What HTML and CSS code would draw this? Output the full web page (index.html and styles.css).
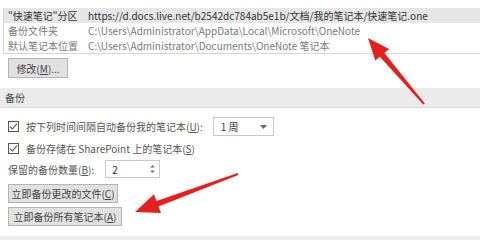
FILE: index.html
```html
<!DOCTYPE html>
<html lang="zh-CN">
<head>
<meta charset="UTF-8">
<link rel="stylesheet" href="styles.css">
</head>
<body>
<div id="page">
	<div class="paths">
		<div class="row active">
			<span class="key">"快速笔记"分区</span>
			<span class="val">https://d.docs.live.net/b2542dc784ab5e1b/文档/我的笔记本/快速笔记.one</span>
		</div>
		<div class="row">
			<span class="key">备份文件夹</span>
			<span class="val">C:\Users\Administrator\AppData\Local\Microsoft\OneNote</span>
		</div>
		<div class="row">
			<span class="key">默认笔记本位置</span>
			<span class="val">C:\Users\Administrator\Documents\OneNote 笔记本</span>
		</div>
	</div>
	<div class="btn btn-edit">修改(<u>M</u>)...</div>

	<div class="band">备份</div>

	<div class="opt opt-auto">
		<span class="chk"><svg width="9" height="9" viewBox="0 0 9 9"><path d="M1 4.6 L3.4 7 L8 1.6" fill="none" stroke="#555" stroke-width="1.1"/></svg></span>
		<span>按下列时间间隔自动备份我的笔记本(<u>U</u>):</span>
		<div class="select">1 周<svg class="caret" width="7" height="4" viewBox="0 0 7 4"><path d="M0 0 H7 L3.5 4 Z" fill="#666"/></svg></div>
	</div>
	<div class="opt opt-sp">
		<span class="chk"><svg width="9" height="9" viewBox="0 0 9 9"><path d="M1 4.6 L3.4 7 L8 1.6" fill="none" stroke="#555" stroke-width="1.1"/></svg></span>
		<span>备份存储在 SharePoint 上的笔记本(<u>S</u>)</span>
	</div>
	<div class="opt opt-keep">
		<span>保留的备份数量(<u>B</u>):</span>
		<div class="spin">2<svg class="arrows" width="5" height="10" viewBox="0 0 5 10"><path d="M0 3.5 L2.5 1 L5 3.5 Z M0 6.5 L2.5 9 L5 6.5 Z" fill="#777"/></svg></div>
	</div>
	<div class="btn btn-changed">立即备份更改的文件(<u>C</u>)</div>
	<div class="btn btn-all">立即备份所有笔记本(<u>A</u>)</div>
	<div class="foot"></div>
</div>

<svg class="marks" width="480" height="240" viewBox="0 0 480 240">
	<polygon fill="#e3201d" points="368,38 389.1,49 384.5,52.9 424.8,103.4 423.2,104.6 379.9,56.7 375.3,60.6"/>
	<polygon fill="#e3201d" points="135,212 154,194.3 156.5,200.9 237.7,173.1 238.3,174.9 158.5,206.5 161,213.1"/>
</svg>
</body>
</html>
```

FILE: styles.css
```css
*{
	margin:0; padding:0; box-sizing:border-box;
}
body{
	width:480px; height:240px; overflow:hidden;
	background:#fff; position:relative;
	font-family:"Noto Sans CJK SC", "Noto Sans", sans-serif;
	font-size:10px; color:#444;
}
#page{
	display:flex; flex-direction:column; height:240px;
}
u{ text-decoration:underline; }

/* path table */
.paths{
	margin:8px 0 0 3px;
	border-left:1px solid #d6d6d6;
	border-bottom:1px solid #d6d6d6;
}
.paths .row{
	display:grid; grid-template-columns:84px 1fr;
	height:15px; line-height:15px;
	color:#7a7a7a; white-space:nowrap;
}
.paths .row.active{
	background:#e6e6e6; color:#333;
}
.paths .key{ padding-left:4px; }

/* buttons */
.btn{
	align-self:flex-start;
	display:flex; align-items:center; justify-content:center;
	height:19px; margin-left:8px;
	background:#e1e1e1; border:1px solid #b4b4b4;
	color:#444; white-space:nowrap;
}
.btn-edit{ width:60px; margin-top:4px; height:20px; }
.btn-changed{ width:110px; margin-top:6px; }
.btn-all{ width:114px; margin-top:4px; }

/* section band */
.band{
	margin-top:10px; height:20px; line-height:19px;
	padding-left:5px;
	background:#ebebeb; border-bottom:1px solid #dadada;
	color:#444;
}

/* option rows */
.opt{
	display:flex; align-items:center;
	padding-left:8px; color:#555; white-space:nowrap;
}
.opt-auto{ margin-top:9px; height:19px; }
.opt-sp{ margin-top:4px; height:16px; }
.opt-keep{ margin-top:4px; height:18px; }
.chk{
	width:11px; height:11px; margin-right:7px;
	border:1px solid #555; background:#fff;
	display:flex; align-items:center; justify-content:center;
}
.select{
	margin-left:10px; width:61px; height:19px;
	border:1px solid #c8c8c8; background:#fff;
	display:flex; align-items:center;
	padding-left:7px; color:#333;
}
.caret{ margin-left:auto; margin-right:6px; }
.spin{
	margin-left:11px; width:55px; height:18px;
	border:1px solid #c8c8c8; background:#fff;
	display:flex; align-items:center;
	padding-left:6px; color:#333;
}
.arrows{ margin-left:auto; margin-right:4px; }

.foot{
	margin-top:auto; height:4px; background:#eeeeee;
}

.marks{
	position:absolute; top:0; left:0; pointer-events:none;
}
```
